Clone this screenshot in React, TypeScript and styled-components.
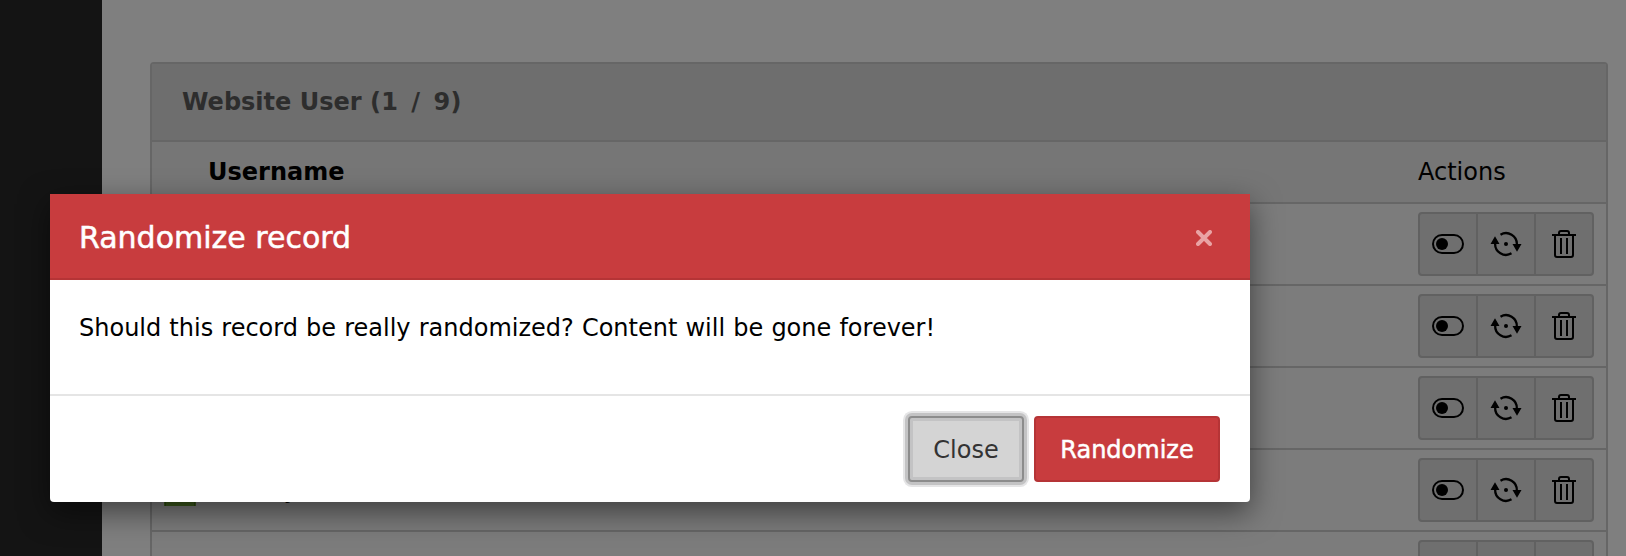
import React from "react";
import styled, { createGlobalStyle, css } from "styled-components";

const Global = createGlobalStyle`
  * { box-sizing: border-box; }
  html, body { margin: 0; padding: 0; }
  body {
    background: #7f7f7f;
    color: #000;
    font: 24px/34px Verdana, "DejaVu Sans", sans-serif;
    overflow: hidden;
  }
`;

const Screen = styled.div`
  position: relative;
  display: flex;
  width: 1626px;
  height: 556px;
  overflow: hidden;
`;

const Sidebar = styled.aside`
  flex: 0 0 102px;
  background: #141414;
`;

const Content = styled.main`
  flex: 1;
  padding: 62px 18px 0 48px;
`;

const Panel = styled.section`
  height: 600px;
  border: 2px solid #666;
  border-radius: 4px;
  background: #7c7c7c;
`;

const PanelHeading = styled.header`
  height: 78px;
  padding: 21px 30px;
  border-bottom: 2px solid #666;
  background: #6e6e6e;
  color: #2d2d2d;
  font-weight: bold;
  white-space: nowrap;
`;

const Count = styled.span`
  letter-spacing: 0.3px;
  word-spacing: 4.5px;
`;

const Row = styled.div<{ $head?: boolean }>`
  display: flex;
  align-items: center;
  height: ${(p) => (p.$head ? 62 : 82)}px;
  padding: 0 12px;
  border-bottom: 2px solid #666;
  background: ${(p) => (p.$head ? "#767676" : "#7c7c7c")};
`;

const IconCell = styled.div`
  flex: 0 0 44px;
  line-height: 0;
`;

const NameCell = styled.div<{ $bold?: boolean }>`
  flex: 1;
  font-weight: ${(p) => (p.$bold ? "bold" : "normal")};
  letter-spacing: ${(p) => (p.$bold ? 0 : 0.4)}px;
`;

const ActionsCell = styled.div`
  flex: 0 0 176px;
`;

const ButtonGroup = styled.div`
  display: flex;
  height: 64px;
  border: 2px solid #616161;
  border-radius: 4px;
  background: #6f6f6f;
`;

const ActionButton = styled.button`
  display: flex;
  flex: 1;
  align-items: center;
  justify-content: center;
  padding: 0;
  border: 0;
  background: none;
  & + & { border-left: 2px solid #616161; }
`;

const Modal = styled.div`
  position: absolute;
  top: 194px;
  left: 50px;
  width: 1200px;
  border-radius: 0 0 4px 4px;
  background: #fff;
  box-shadow: 0 10px 30px rgba(0, 0, 0, 0.5);
`;

const ModalHeader = styled.header`
  display: flex;
  align-items: center;
  justify-content: space-between;
  height: 86px;
  padding: 3px 38px 0 29px;
  border-bottom: 2px solid #b53436;
  background: #c83c3e;
  color: #fff;
`;

const Title = styled.h4`
  margin: 0;
  font-size: 30px;
  font-weight: normal;
  -webkit-text-stroke: 0.5px #fff;
`;

const Dismiss = styled.button`
  padding: 0;
  border: 0;
  background: none;
  line-height: 0;
`;

const ModalBody = styled.div`
  height: 114px;
  padding: 31px 29px;
  word-spacing: 0.5px;
`;

const ModalFooter = styled.footer`
  display: flex;
  justify-content: flex-end;
  gap: 10px;
  height: 108px;
  padding: 20px 30px;
  border-top: 2px solid #e5e5e5;
`;

const FooterButton = styled.button<{ $danger?: boolean }>`
  width: ${(p) => (p.$danger ? 186 : 116)}px;
  height: 66px;
  padding: 2px 0 0;
  border-radius: 4px;
  font: inherit;
  ${(p) =>
    p.$danger
      ? css`
          border: 2px solid #b53436;
          background: #c83c3e;
          color: #fff;
          -webkit-text-stroke: 0.5px #fff;
        `
      : css`
          border: 2px solid #8c8c8c;
          background: #d4d4d4;
          color: #333;
          box-shadow: inset 0 0 0 3px #c3c3c4, 0 0 0 3px #c3c3c4, 0 0 0 5px #e5e5e6;
        `}
`;

const ToggleIcon = () => (
  <svg width="32" height="32" viewBox="0 0 32 32">
    <rect x="1" y="7" width="30" height="18" rx="9" fill="none" stroke="#000" strokeWidth="2" />
    <circle cx="10" cy="16" r="6" />
  </svg>
);

const RandomizeIcon = () => (
  <svg width="32" height="32" viewBox="0 0 32 32">
    <path
      d="M10.500 6.650A10.850 10.850 0 0 1 26.850 16.500M21.500 25.350A10.850 10.850 0 0 1 5.150 15.500"
      fill="none"
      stroke="#000"
      strokeWidth="2.300"
    />
    <path d="M0.500 16 5 8.300 9.500 16zM22.500 16h9L27 23.700z" />
    <circle cx="16" cy="16" r="2" />
  </svg>
);

const TrashIcon = () => (
  <svg width="32" height="32" viewBox="0 0 32 32" fill="none" stroke="#000" strokeWidth="2">
    <path d="M4 7h24M7 7v20q0 2 2 2h14q2 0 2-2V7M11 7V5q0-2 2-2h6q2 0 2 2v2M13 10v16M19 10v16" />
  </svg>
);

const UserIcon = () => (
  <svg width="32" height="32" viewBox="0 0 32 32">
    <path d="M0 32V22q0-6 6-6h20q6 0 6 6v10z" fill="#3c5a1c" />
    <path d="M1.500 32v-9M30.500 32v-9" stroke="#2c4413" />
    <circle cx="16" cy="9" r="8" fill="#6b543c" />
  </svg>
);

const names = ["", "", "", "stanley", ""];

export default function App() {
  return (
    <Screen>
      <Global />
      <Sidebar />
      <Content>
        <Panel>
          <PanelHeading>
            Website User <Count>(1 / 9)</Count>
          </PanelHeading>
          <Row $head>
            <IconCell />
            <NameCell $bold>Username</NameCell>
            <ActionsCell>Actions</ActionsCell>
          </Row>
          {names.map((name, i) => (
            <Row key={i}>
              <IconCell>
                <UserIcon />
              </IconCell>
              <NameCell>{name}</NameCell>
              <ActionsCell>
                <ButtonGroup>
                  <ActionButton aria-label="Toggle"><ToggleIcon /></ActionButton>
                  <ActionButton aria-label="Randomize"><RandomizeIcon /></ActionButton>
                  <ActionButton aria-label="Delete"><TrashIcon /></ActionButton>
                </ButtonGroup>
              </ActionsCell>
            </Row>
          ))}
        </Panel>
      </Content>
      <Modal role="dialog">
        <ModalHeader>
          <Title>Randomize record</Title>
          <Dismiss aria-label="Close">
            <svg width="16" height="16" viewBox="0 0 16 16">
              <path d="M2 2l12 12M14 2 2 14" stroke="#e9a3a4" strokeWidth="4" strokeLinecap="round" />
            </svg>
          </Dismiss>
        </ModalHeader>
        <ModalBody>Should this record be really randomized? Content will be gone forever!</ModalBody>
        <ModalFooter>
          <FooterButton>Close</FooterButton>
          <FooterButton $danger>Randomize</FooterButton>
        </ModalFooter>
      </Modal>
    </Screen>
  );
}
